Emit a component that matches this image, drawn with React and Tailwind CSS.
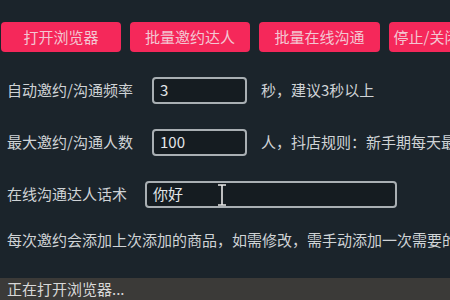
import React from "react";

const FONT = { fontFamily: '"Noto Sans CJK SC", "Liberation Sans", sans-serif' };

// TOP BUTTONS
const ActionButton = ({ label, width }) => (
  <button
    className={`${width} h-[30px] shrink-0 rounded-[4px] bg-[#f5285a] text-[15px] text-[#f3c6d2] flex items-center justify-center whitespace-nowrap overflow-hidden`}
  >
    {label}
  </button>
);

// ONE FORM ROW
const FieldRow = ({ label, labelWidth, value, inputWidth, hint, children }) => (
  <div className="flex items-center h-[27px]">
    <span className={`${labelWidth} shrink-0 text-[15px] text-[#cfd3d6] whitespace-nowrap`}>{label}</span>
    <div
      className={`${inputWidth} relative shrink-0 h-[27px] rounded-[4px] border-2 border-[#a9afb3] bg-[#151c21] flex items-center px-[6px] text-[15px] text-[#e4e7ea]`}
    >
      {value}
      {children}
    </div>
    {hint && <span className="ml-[14px] text-[15px] text-[#cfd3d6] whitespace-nowrap">{hint}</span>}
  </div>
);

export default function App() {
  return (
    <div style={FONT} className="w-[450px] h-[300px] overflow-hidden bg-[#1b242b] flex flex-col">
      <div className="flex gap-[9px] pl-[1px] pt-[22px]">
        <ActionButton label="打开浏览器" width="w-[120px]" />
        <ActionButton label="批量邀约达人" width="w-[120px]" />
        <ActionButton label="批量在线沟通" width="w-[121px]" />
        <ActionButton label="停止/关闭浏览器" width="w-[120px]" />
      </div>

      <div className="flex flex-col gap-[25px] pl-[7px] mt-[25px]">
        <FieldRow label="自动邀约/沟通频率" labelWidth="w-[145px]" value="3" inputWidth="w-[95px]" hint="秒，建议3秒以上" />
        <FieldRow
          label="最大邀约/沟通人数"
          labelWidth="w-[145px]"
          value="100"
          inputWidth="w-[95px]"
          hint="人，抖店规则：新手期每天最多邀约100人"
        />
        <FieldRow label="在线沟通达人话术" labelWidth="w-[138px]" value="你好" inputWidth="w-[252px]">
          <svg className="absolute left-[70px] top-[1px]" width="10" height="22" viewBox="0 0 10 22">
            <path d="M1 1h8M5 1v20M1 21h8" stroke="#e8e8e8" strokeWidth="1.6" fill="none" />
          </svg>
        </FieldRow>
      </div>

      <div className="pl-[7px] mt-[22px] text-[15px] text-[#cfd3d6] whitespace-nowrap leading-[20px]">
        每次邀约会添加上次添加的商品，如需修改，需手动添加一次需要的商品
      </div>

      <div className="mt-auto h-[22px] bg-[#3b3a38] flex items-center pl-[7px] text-[15px] text-[#d8d8d8] whitespace-nowrap">
        正在打开浏览器...
      </div>
    </div>
  );
}
